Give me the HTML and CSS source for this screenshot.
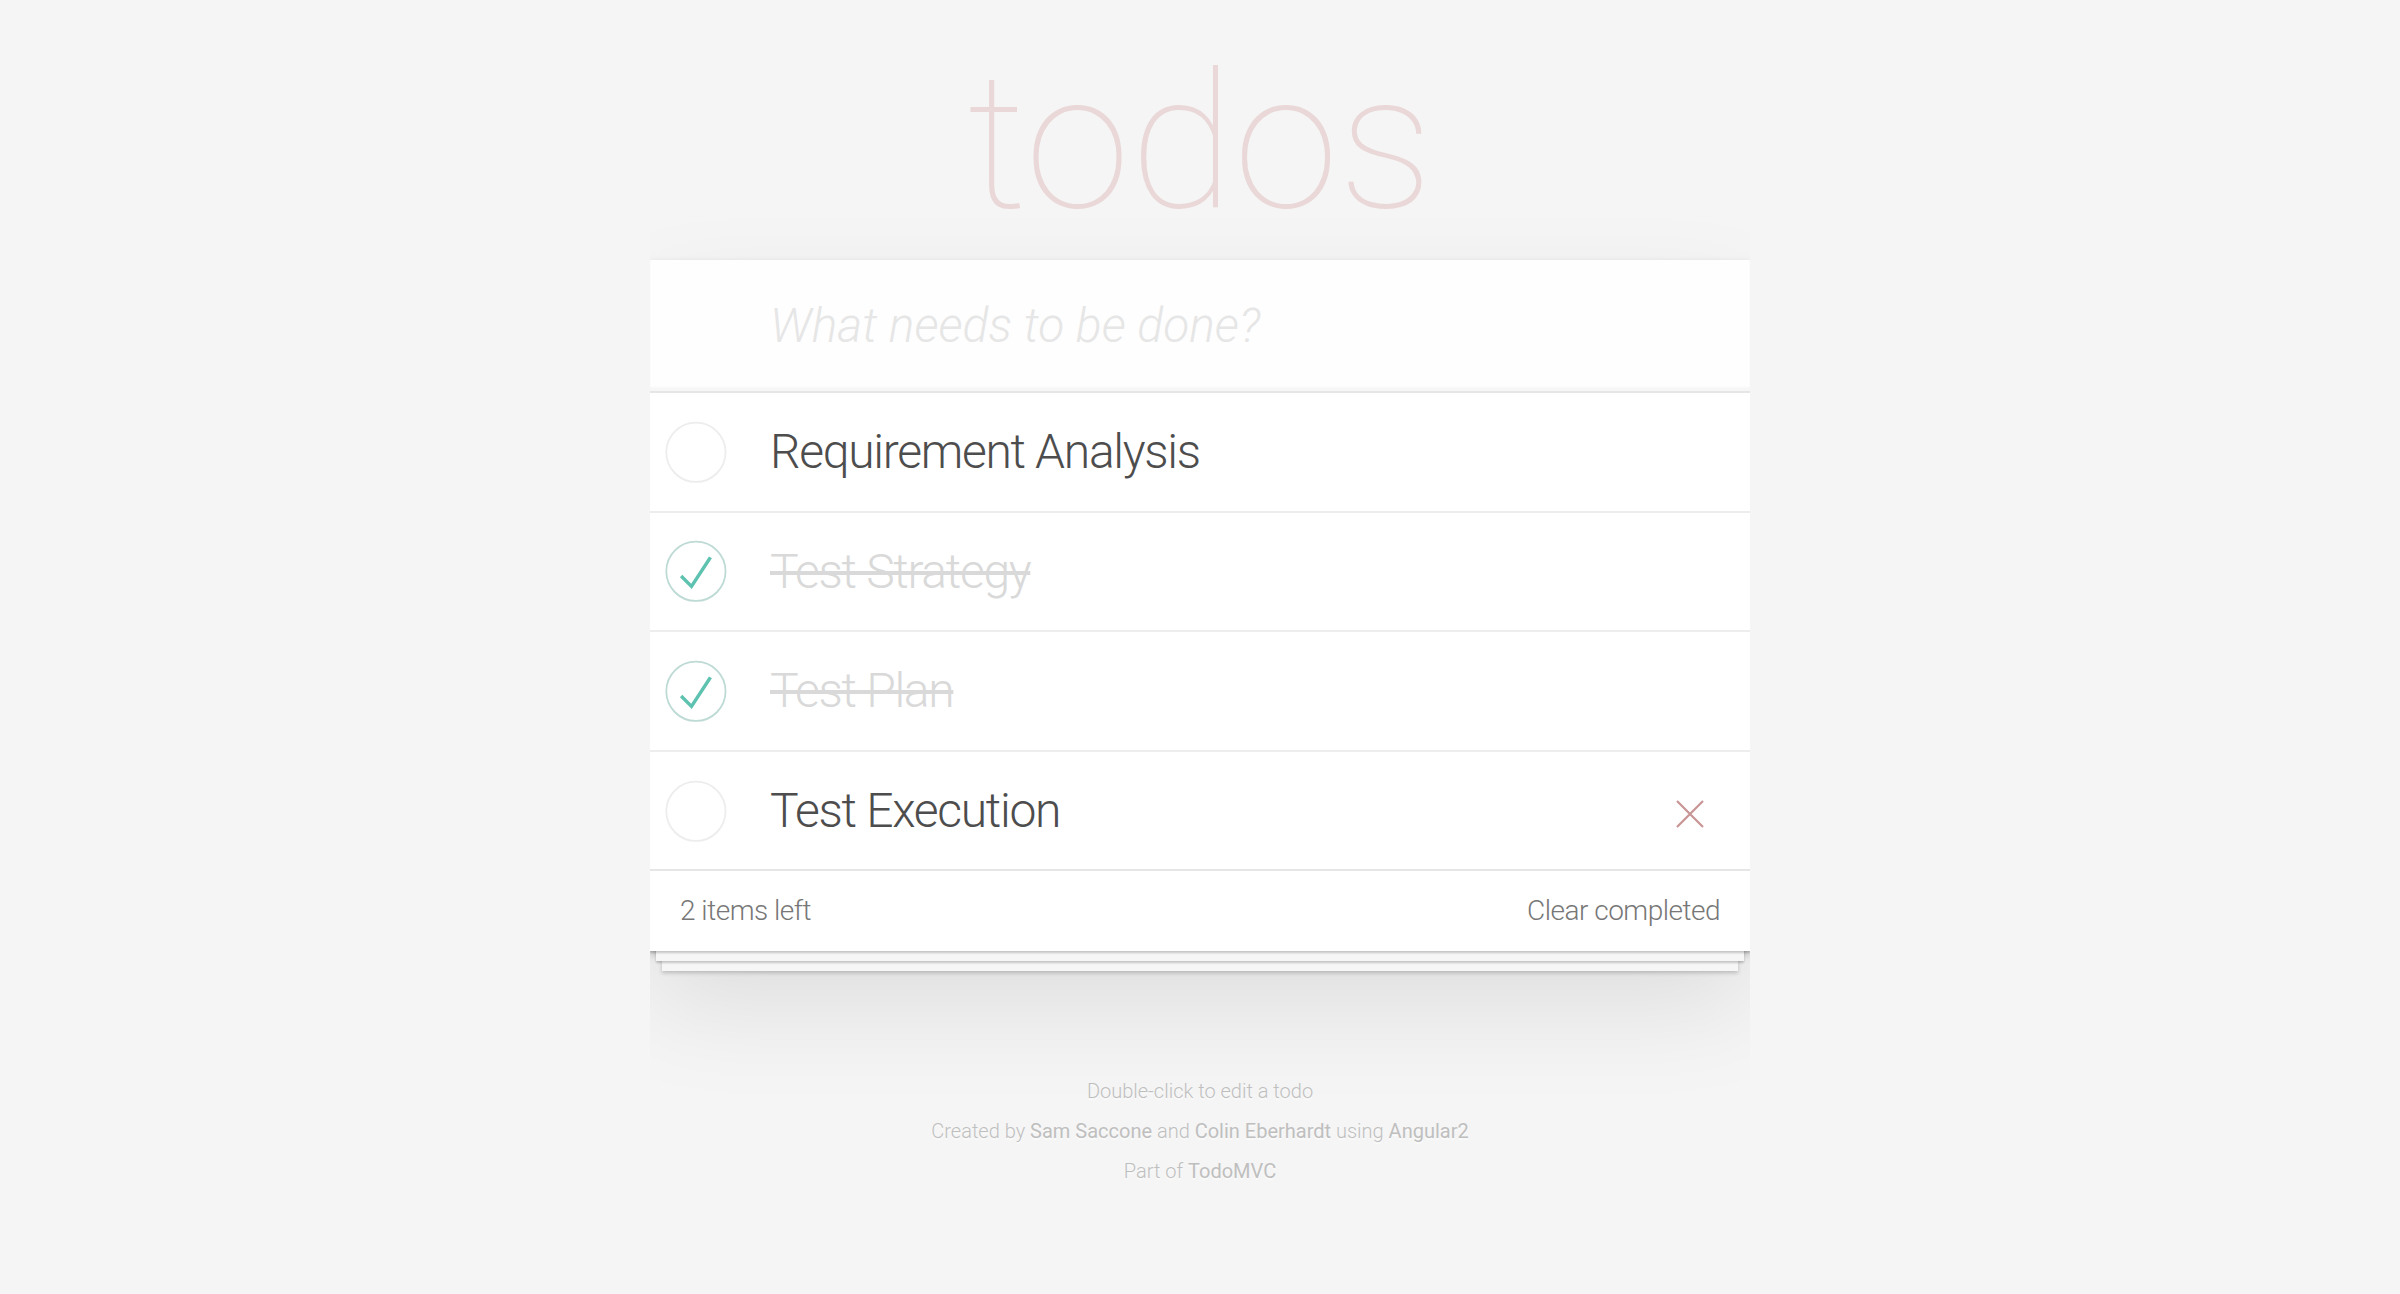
FILE: index.html
```html
<!DOCTYPE html>
<html lang="en">
<head>
    <meta charset="UTF-8">
    <meta name="viewport" content="width=device-width, initial-scale=1.0">
    <title>Angular2 • TodoMVC</title>
    <link rel="stylesheet" href="styles.css">
</head>
<body>
    <section class="todoapp">
        <header class="header">
            <h1>todos</h1>
        </header>
        <div class="card">
            <input class="new-todo" placeholder="What needs to be done?">
            <section class="main">
                <ul class="todo-list">
                    <li>
                        <svg class="toggle" width="80" height="80" viewBox="-10 -18 100 135"><circle cx="50" cy="50" r="50" fill="none" stroke="#ededed" stroke-width="3"/></svg>
                        <label>Requirement Analysis</label>
                    </li>
                    <li class="completed">
                        <svg class="toggle" width="80" height="80" viewBox="-10 -18 100 135"><circle cx="50" cy="50" r="50" fill="none" stroke="#bddad5" stroke-width="3"/><path fill="#5dc2af" d="M72 25L42 71 27 56l-4 4 20 20 34-52z"/></svg>
                        <label>Test Strategy</label>
                    </li>
                    <li class="completed">
                        <svg class="toggle" width="80" height="80" viewBox="-10 -18 100 135"><circle cx="50" cy="50" r="50" fill="none" stroke="#bddad5" stroke-width="3"/><path fill="#5dc2af" d="M72 25L42 71 27 56l-4 4 20 20 34-52z"/></svg>
                        <label>Test Plan</label>
                    </li>
                    <li>
                        <svg class="toggle" width="80" height="80" viewBox="-10 -18 100 135"><circle cx="50" cy="50" r="50" fill="none" stroke="#ededed" stroke-width="3"/></svg>
                        <label>Test Execution</label>
                        <button class="destroy"><svg width="28" height="28" viewBox="0 0 28 28"><path d="M1 1L27 27M27 1L1 27" stroke="#c89494" stroke-width="2.2" fill="none"/></svg></button>
                    </li>
                </ul>
            </section>
            <footer class="footer">
                <span class="todo-count">2 items left</span>
                <button class="clear-completed">Clear completed</button>
            </footer>
        </div>
    </section>
    <footer class="info">
        <p>Double-click to edit a todo</p>
        <p>Created by <a href="#">Sam Saccone</a> and <a href="#">Colin Eberhardt</a> using <a href="#">Angular2</a></p>
        <p>Part of <a href="#">TodoMVC</a></p>
    </footer>
</body>
</html>
```

FILE: styles.css
```css
body {
    font: 28px Roboto, 'Helvetica Neue', Helvetica, Arial, sans-serif;
    line-height: 1.4em;
    background: #f5f5f5;
    color: #4d4d4d;
    max-width: 1100px;
    margin: 0 auto;
    font-weight: 300;
}
button {
    margin: 0;
    padding: 0;
    border: 0;
    background: none;
    font: inherit;
    color: inherit;
    letter-spacing: inherit;
}
.todoapp {
    margin: 0 0 80px 0;
}
.header h1 {
    margin: 42px 0 18px;
    font-size: 190px;
    line-height: 200px;
    font-weight: 100;
    text-align: center;
    color: rgba(175, 47, 47, 0.15);
}
.card {
    background: #fff;
    box-shadow: 0 4px 8px 0 rgba(0, 0, 0, 0.2), 0 50px 100px 0 rgba(0, 0, 0, 0.1);
}
.new-todo {
    display: block;
    margin: 0;
    width: 100%;
    box-sizing: border-box;
    font-size: 48px;
    font-family: inherit;
    font-weight: inherit;
    line-height: 1.4em;
    height: 131px;
    padding: 32px 32px 32px 120px;
    border: none;
    color: inherit;
    background: rgba(0, 0, 0, 0.003);
    box-shadow: inset 0 -4px 2px rgba(0, 0, 0, 0.03);
}
.new-todo::placeholder {
    font-style: italic;
    font-weight: 300;
    color: #e6e6e6;
}
.main {
    border-top: 2px solid #e6e6e6;
}
.todo-list {
    margin: 0;
    padding: 0;
    list-style: none;
}
.todo-list li {
    display: flex;
    align-items: center;
    font-size: 48px;
    letter-spacing: -1.3px;
    border-bottom: 2px solid #ededed;
}
.todo-list li:last-child {
    border-bottom: none;
}
.toggle {
    flex: none;
    width: 80px;
    height: 80px;
}
.todo-list label {
    flex: 1;
    padding: 30px 30px 30px 40px;
    line-height: 1.2;
}
.todo-list li.completed label {
    color: #d9d9d9;
    text-decoration: line-through;
}
.destroy {
    flex: none;
    width: 80px;
    height: 80px;
    margin: 6px 20px 0 0;
    display: flex;
    align-items: center;
    justify-content: center;
}
.footer {
    display: flex;
    justify-content: space-between;
    color: #777;
    padding: 20px 30px;
    height: 40px;
    letter-spacing: -0.5px;
    border-top: 2px solid #e6e6e6;
    line-height: 40px;
    box-shadow: 0 2px 2px rgba(0, 0, 0, 0.2),
        0 16px 0 -6px #f6f6f6,
        0 18px 2px -6px rgba(0, 0, 0, 0.2),
        0 32px 0 -12px #f6f6f6,
        0 34px 4px -12px rgba(0, 0, 0, 0.2);
}
.clear-completed {
    line-height: 40px;
    cursor: pointer;
}
.info {
    margin: 130px auto 0;
    color: #bfbfbf;
    font-size: 20px;
    text-shadow: 0 2px 0 rgba(255, 255, 255, 0.5);
    text-align: center;
}
.info p {
    line-height: 1;
    margin: 0 0 20px;
}
.info a {
    color: inherit;
    text-decoration: none;
    font-weight: 400;
}
```
